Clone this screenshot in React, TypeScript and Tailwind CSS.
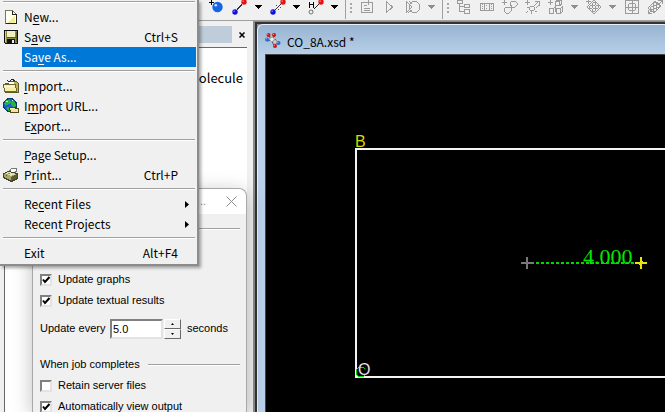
import React from 'react';

const MENU_FONT = "font-['Noto_Sans_CJK_TC','Noto_Sans',sans-serif]";
const DIALOG_FONT = "font-['Liberation_Sans',Arial,sans-serif]";

type IconProps = { children: React.ReactNode };

const Icon: React.FC<IconProps> = ({ children }) => (
    <svg width="16" height="16" viewBox="0 0 16 16" fill="none" shapeRendering="crispEdges" aria-hidden="true">
        {children}
    </svg>
);

const NewIcon = () => (
    <Icon>
        <path d="M2.5 1.5h7l4 4v9h-11z" fill="#fffff4" stroke="#77775f" />
        <path d="M4 14l8-8v8H4z" fill="#f2ee9c" />
        <path d="M9.5 1.5v4h4" stroke="#222" />
        <path d="M4 3h4v2H4z" fill="#fff" />
        <path d="M13.5 6v8.5H3" stroke="#222" />
    </Icon>
);

const SaveIcon = () => (
    <Icon>
        <path d="M1.5 1.5h13v13h-12l-1-1z" fill="#8c8c3c" stroke="#111" />
        <path d="M4 2h8v6H4z" fill="#efefc0" />
        <path d="M2 2h1v11H2z" fill="#d2d27a" />
        <path d="M4 8h9v1H4z" fill="#5b5b20" />
        <path d="M4 10h8v4H4z" fill="#111" />
        <path d="M9 11h2v3H9z" fill="#eee" />
        <path d="M13 3h1v10h-1z" fill="#60602a" />
    </Icon>
);

const ImportIcon = () => (
    <Icon>
        <path d="M2 5h4l1-2h6l2 2v9H2z" fill="#bcb154" stroke="#5e5925" />
        <path d="M0.5 6.5h12l1 7h-12z" fill="#f5efa0" stroke="#6c6530" />
        <path d="M4 2l2 2 3-3 3 2" stroke="#222" />
        <path d="M6 4h5v2H6z" fill="#fff" />
        <path d="M2 8h9v1H2z" fill="#fffde0" />
    </Icon>
);

const GlobeIcon = () => (
    <Icon>
        <circle cx="7" cy="7" r="6.5" fill="#1765c4" stroke="#0a3772" />
        <path d="M3 2h4l1 2-2 2-3 1-2-1zM9 3l3 1 1 4-3 1-2-3zM4 9l3 1-1 3-2-1z" fill="#28b33a" />
        <path d="M3 3h2v1H3zM9 2h1v1H9z" fill="#bdf3ff" />
        <path d="M6.5 9.5h5l1 1h3v4h-8z" fill="#f3e6a4" stroke="#544b1c" />
    </Icon>
);

const PrintIcon = () => (
    <Icon>
        <path d="M5 6l4-5 5 1-2 5z" fill="#fff" stroke="#777" />
        <path d="M0.5 6.5l5-2 9 2v5l-6 3-8-4z" fill="#a8a66a" stroke="#444428" />
        <path d="M2 6l4-1 7 2-5 2z" fill="#e3e2b6" />
        <path d="M8 10l6-3v4l-6 3z" fill="#5e5d30" />
        <path d="M5 6h2v1H5z" fill="#1ccf2c" />
        <path d="M3 8h1v1H3z" fill="#c22" />
    </Icon>
);

const Ball: React.FC<{ x: number; y: number; color: string; r?: number }> = ({ x, y, color, r = 2.7 }) => (
    <g shapeRendering="auto">
        <circle cx={x} cy={y} r={r} fill={color} />
        <circle cx={x - r / 3} cy={y - r / 3} r={r / 4} fill="#fff" fillOpacity="0.8" />
    </g>
);

const AtomIcon = () => (
    <Icon>
        <path d="M0 3.5h5M2.5 1v5" stroke="#000" />
        <Ball x={8.5} y={8} r={5.2} color="#1464e8" />
    </Icon>
);

const BondIcon = () => (
    <Icon>
        <path d="M3 13L12 3" stroke="#333" />
        <Ball x={3} y={13} color="#1010e0" />
        <Ball x={12} y={3} color="#e81010" />
    </Icon>
);

const FragmentIcon = () => (
    <Icon>
        <path d="M3 13L13 3" stroke="#333" strokeDasharray="2 1" />
        <path d="M6 7l2-2M8 11l3-3" stroke="#e81010" strokeDasharray="2 1" />
        <Ball x={3} y={13} color="#1010e0" />
        <Ball x={13} y={3} color="#e81010" />
    </Icon>
);

const HydrogenIcon = () => (
    <Icon>
        <path d="M1.5 3v6M5.5 3v6M2 5.500h4" stroke="#000" />
        <path d="M4 12L12 4" stroke="#222" strokeDasharray="2 1" />
        <circle cx="3" cy="13" r="2" fill="#eee" stroke="#777" shapeRendering="auto" />
        <Ball x={13} y={3} color="#e81010" />
    </Icon>
);

const ScriptIcon = () => (
    <Icon>
        <path d="M2.5 3.5h11v10h-11zM9.5 1v5M7 3.5h4M5 6.5h3M5 9.5h6M5 11.5h6" stroke="#9b9b9b" />
    </Icon>
);

const PlayIcon = () => (
    <Icon>
        <path d="M4.5 2.5v11l6-5.5z" stroke="#9b9b9b" />
    </Icon>
);

const DebugIcon = () => (
    <Icon>
        <path d="M1.5 2v12M2 3l5 5-5 5M4 2l3 3M3 14l4-3" stroke="#9b9b9b" />
        <circle cx="9.5" cy="8" r="5.5" stroke="#9b9b9b" />
    </Icon>
);

const TreeIcon = () => (
    <Icon>
        <path d="M1.5 1.5h5v3h-5zM8.5 5.5h5v3h-5zM8.5 10.5h5v4h-5zM3.5 5v7.5h5M4 7.5h4" stroke="#9b9b9b" />
    </Icon>
);

const FilmIcon = () => (
    <Icon>
        <path d="M1.5 4.5h13v7h-13zM5.5 5v6M10.5 5v6" stroke="#9b9b9b" />
        <path d="M3.5 5v7M7 6.500h2M7 9.500h2M12.5 5v7" stroke="#9b9b9b" strokeDasharray="1 1" />
    </Icon>
);

const MotionIcon = () => (
    <Icon>
        <path d="M0 3.5h5M2.5 1v5" stroke="#9b9b9b" />
        <path d="M8 7V4l2-2h3l2 2v2l-2 2H4L2 10v2l2 2h3l2-2V6" stroke="#9b9b9b" />
    </Icon>
);

const VectorIcon = () => (
    <Icon>
        <path d="M0 3.5h5M2.5 1v5M9 7l4-4M10 2.5h4.5V7M11 9l3-3M3 12l-2 2M6 12v3M2 8.500h2M10 12l2 1" stroke="#9b9b9b" />
        <circle cx="7" cy="9.5" r="2.5" stroke="#9b9b9b" />
    </Icon>
);

const CellsIcon = () => (
    <Icon>
        <path d="M0 3.5h5M2.5 1v5M7.5 2.5h4v4h-4zM1.5 9.5h4v5h-4zM8.5 9.5h4v5h-4zM7.5 2.5l2-1h4v4l-2 1M12.5 9.5l2-2v5l-2 2M5.5 9.5l2-2v5" stroke="#9b9b9b" />
    </Icon>
);

const LatticeIcon = () => (
    <Icon>
        <path d="M8 1l7 7-7 7-7-7z" stroke="#9b9b9b" />
        <path d="M0 2.5h5M2.5 0v5" stroke="#9b9b9b" />
        <circle cx="8" cy="5" r="1.5" stroke="#9b9b9b" />
        <circle cx="5" cy="8" r="1.5" stroke="#9b9b9b" />
        <circle cx="11" cy="8" r="1.5" stroke="#9b9b9b" />
        <circle cx="8" cy="11" r="1.5" stroke="#9b9b9b" />
    </Icon>
);

const TargetIcon = () => (
    <Icon>
        <path d="M1.5 1.5h13v13h-13zM8 1v14M1 8h14" stroke="#9b9b9b" />
        <circle cx="8" cy="8" r="4" stroke="#9b9b9b" />
    </Icon>
);

const RotateCellIcon = () => (
    <Icon>
        <path d="M1 9l7-7 6 5-7 7zM11 1.5h4V5M15 2l-3 3M1.5 11v3.5H5M1 15l3-3" stroke="#9b9b9b" />
        <circle cx="8" cy="5" r="1.5" stroke="#9b9b9b" />
        <circle cx="5" cy="9" r="1.5" stroke="#9b9b9b" />
        <circle cx="11" cy="7" r="1.5" stroke="#9b9b9b" />
        <circle cx="8" cy="11" r="1.5" stroke="#9b9b9b" />
    </Icon>
);

const MoleculeIcon = () => (
    <svg width="16" height="16" viewBox="0 0 16 16" aria-hidden="true">
        <path d="M4 3l2 5-4 1M6 8l4-4M6 8l3 5 4-2-3-4" stroke="#444" fill="none" />
        <circle cx="7" cy="7.5" r="2.2" fill="#e8e8e8" stroke="#888" strokeWidth="0.5" />
        <circle cx="10" cy="10" r="2.2" fill="#ccc" stroke="#777" strokeWidth="0.5" />
        <Ball x={3.5} y={3} r={2} color="#c81818" />
        <Ball x={9} y={3} r={2} color="#c81818" />
        <Ball x={10} y={14} r={2} color="#c81818" />
        <Ball x={2} y={7.5} r={2} color="#2a6fc8" />
        <Ball x={13.5} y={11} r={2} color="#2a6fc8" />
    </svg>
);

const ToolButton: React.FC<{ label: string; children: React.ReactNode }> = ({ label, children }) => (
    <button type="button" aria-label={label} className="flex w-[23px] shrink-0 items-start justify-center">
        {children}
    </button>
);

const DropButton: React.FC<{ label: string; disabled?: boolean }> = ({ label, disabled }) => (
    <button type="button" aria-label={label} className={`flex h-4 w-[15px] shrink-0 items-center justify-center ${disabled ? 'text-[#8e8e8e]' : 'text-black'}`}>
        <svg width="7" height="4" viewBox="0 0 7 4" fill="currentColor" shapeRendering="crispEdges">
            <path d="M0 0h7L3.5 4z" />
        </svg>
    </button>
);

const ToolDivider = () => (
    <div className="flex h-5 w-[13px] shrink-0 items-start gap-1 pl-[3px]">
        <span className="h-5 w-px bg-[#a0a0a0]" />
        <svg width="3" height="16" viewBox="0 0 3 16" fill="#a8a8a8" shapeRendering="crispEdges">
            <path d="M0 4h2v2H0zM0 8h2v2H0zM0 12h2v2H0z" />
        </svg>
    </div>
);

const Toolbar = () => (
    <div className="h-[21px] shrink-0 overflow-hidden border-b border-[#a0a0a0] bg-[#f0f0f0] pl-[205px]">
        <div className="-mt-px flex items-start">
            <ToolButton label="Add atom"><AtomIcon /></ToolButton>
            <ToolButton label="Sketch bond"><BondIcon /></ToolButton>
            <DropButton label="Bond options" />
            <ToolButton label="Sketch fragment"><FragmentIcon /></ToolButton>
            <DropButton label="Fragment options" />
            <ToolButton label="Adjust hydrogen"><HydrogenIcon /></ToolButton>
            <DropButton label="Hydrogen options" />
            <ToolDivider />
            <ToolButton label="New script"><ScriptIcon /></ToolButton>
            <ToolButton label="Run"><PlayIcon /></ToolButton>
            <ToolButton label="Debug"><DebugIcon /></ToolButton>
            <DropButton label="Debug options" disabled />
            <ToolDivider />
            <ToolButton label="Hierarchy"><TreeIcon /></ToolButton>
            <ToolButton label="Animation"><FilmIcon /></ToolButton>
            <ToolButton label="Motion group"><MotionIcon /></ToolButton>
            <ToolButton label="Vector"><VectorIcon /></ToolButton>
            <ToolButton label="Build cells"><CellsIcon /></ToolButton>
            <DropButton label="Cell options" disabled />
            <ToolButton label="Lattice"><LatticeIcon /></ToolButton>
            <DropButton label="Lattice options" disabled />
            <ToolButton label="Center"><TargetIcon /></ToolButton>
            <ToolButton label="Rotate cell"><RotateCellIcon /></ToolButton>
        </div>
    </div>
);

type MenuEntry = {
    label: string;
    accessKey: number;
    shortcut?: string;
    icon?: React.ReactNode;
    submenu?: boolean;
    selected?: boolean;
};

const menuGroups: MenuEntry[][] = [
    [
        { label: 'New...', accessKey: 1, icon: <NewIcon /> },
        { label: 'Save', accessKey: 1, shortcut: 'Ctrl+S', icon: <SaveIcon /> },
        { label: 'Save As...', accessKey: 2, selected: true },
    ],
    [
        { label: 'Import...', accessKey: 0, icon: <ImportIcon /> },
        { label: 'Import URL...', accessKey: 1, icon: <GlobeIcon /> },
        { label: 'Export...', accessKey: 1 },
    ],
    [
        { label: 'Page Setup...', accessKey: 0 },
        { label: 'Print...', accessKey: 1, shortcut: 'Ctrl+P', icon: <PrintIcon /> },
    ],
    [
        { label: 'Recent Files', accessKey: 2, submenu: true },
        { label: 'Recent Projects', accessKey: 5, submenu: true },
    ],
    [{ label: 'Exit', accessKey: -1, shortcut: 'Alt+F4' }],
];

const MenuLabel: React.FC<{ text: string; accessKey: number }> = ({ text, accessKey }) =>
    accessKey < 0 ? (
        <span>{text}</span>
    ) : (
        <span>
            {text.slice(0, accessKey)}
            <u className="underline-offset-2">{text[accessKey]}</u>
            {text.slice(accessKey + 1)}
        </span>
    );

const MenuItem: React.FC<{ entry: MenuEntry }> = ({ entry }) => (
    <button type="button" role="menuitem" className="flex h-5 w-full items-center text-left">
        <span className="flex w-[22px] shrink-0 justify-center">{entry.icon}</span>
        <span className={`flex h-5 flex-1 items-center justify-between pl-0.5 ${entry.selected ? 'bg-[#0078d7] text-white' : ''}`}>
            <MenuLabel text={entry.label} accessKey={entry.accessKey} />
            {entry.shortcut && <span className="pr-[18px]">{entry.shortcut}</span>}
            {entry.submenu && (
                <svg width="4" height="7" viewBox="0 0 4 7" className="mr-[7px]" fill="#000">
                    <path d="M0 0l4 3.5L0 7z" />
                </svg>
            )}
        </span>
    </button>
);

const FileMenu = () => (
    <div role="menu" aria-label="File" className={`absolute top-0 left-0 z-20 w-[199px] border-r-2 border-b-2 border-[#8c8c8c] bg-[#f0f0f0] pt-px pr-px pb-px text-[12px] leading-5 text-black shadow-[2px_2px_3px_rgba(0,0,0,0.35)] ${MENU_FONT}`}>
        {menuGroups.map((group, i) => (
            <div key={i}>
                <div className={`mr-px ml-[3px] flex flex-col ${i === 0 ? 'h-1.5' : 'h-[9px] pt-[3px]'}`}>
                    <span className="h-px bg-[#a0a0a0]" />
                    <span className="h-px bg-white" />
                </div>
                {group.map(entry => <MenuItem key={entry.label} entry={entry} />)}
            </div>
        ))}
    </div>
);

const CheckRow: React.FC<{ label: string; checked?: boolean }> = ({ label, checked }) => (
    <label className="flex h-[21px] shrink-0 items-center gap-1.5">
        <span className="relative flex size-3">
            <input type="checkbox" defaultChecked={checked} className="peer size-3 appearance-none border-2 border-t-[#808080] border-r-[#e3e3e3] border-b-[#e3e3e3] border-l-[#808080] bg-white" />
            <svg viewBox="0 0 12 12" className="pointer-events-none absolute inset-0 hidden size-3 peer-checked:block" fill="none">
                <path d="M3 5.5l2 2.5 4.5-5" stroke="#000" strokeWidth="2" />
            </svg>
        </span>
        {label}
    </label>
);

const GroupTitle: React.FC<{ title?: string }> = ({ title }) => (
    <div className="flex h-[21px] shrink-0 items-center gap-2">
        {title}
        <span className="h-0.5 flex-1 border-t border-[#a0a0a0] bg-white" />
    </div>
);

const JobDialog = () => (
    <div role="dialog" aria-label="Job options" className={`absolute top-[188px] left-8 z-10 flex h-[calc(100%-188px)] w-[215px] flex-col rounded-t-lg border border-b-0 border-[#a8a8a8] bg-[#f0f0f0] text-[11px] text-black shadow-[0_4px_20px_rgba(0,0,0,0.25)] ${DIALOG_FONT}`}>
        <div className="flex h-[25px] shrink-0 items-center justify-end gap-5 rounded-t-lg bg-white pr-[9px] text-[#888]">
            <span>...</span>
            <button type="button" aria-label="Close">
                <svg width="11" height="11" viewBox="0 0 11 11" stroke="#8a8a8a">
                    <path d="M0.5 0.5l10 10M10.5 0.5l-10 10" />
                </svg>
            </button>
        </div>
        <div className="flex flex-col overflow-hidden pt-1 pr-1.5 pl-[7px]">
            <GroupTitle />
            <div className="h-[30px] shrink-0" />
            <CheckRow label="Update graphs" checked />
            <CheckRow label="Update textual results" checked />
            <div className="flex h-[35px] shrink-0 items-center">
                <label htmlFor="interval" className="w-[70px]">Update every</label>
                <input id="interval" defaultValue="5.0" className="h-5 w-[53px] border-2 border-t-[#808080] border-r-[#e3e3e3] border-b-[#e3e3e3] border-l-[#808080] bg-white px-px" />
                <div className="mr-1.5 ml-px flex flex-col">
                    {['Increase', 'Decrease'].map((name, i) => (
                        <button key={name} type="button" aria-label={name} className="flex h-2.5 w-[17px] items-center justify-center border border-t-white border-r-[#696969] border-b-[#696969] border-l-white">
                            <svg width="3" height="2" viewBox="0 0 3 2" fill="#000">
                                <path d={i === 0 ? 'M0 2l1.5-2L3 2z' : 'M0 0l1.5 2L3 0z'} />
                            </svg>
                        </button>
                    ))}
                </div>
                <span>seconds</span>
            </div>
            <div className="h-2 shrink-0" />
            <GroupTitle title="When job completes" />
            <CheckRow label="Retain server files" />
            <CheckRow label="Automatically view output" checked />
        </div>
    </div>
);

const ProjectPane = () => (
    <aside className="flex w-[253px] shrink-0 flex-col bg-[#f0f0f0] pt-[5px]">
        <div className="flex h-[17px] shrink-0 items-center gap-1 pr-[5px]">
            <div className="h-[17px] flex-1 bg-[#bfcddb]" />
            <button type="button" aria-label="Close pane" className="flex w-3 justify-center">
                <svg width="6" height="6" viewBox="0 0 6 6" stroke="#000" strokeWidth="1.5">
                    <path d="M0.5 0.5l5 5M5.5 0.5l-5 5" />
                </svg>
            </button>
        </div>
        <div className={`mt-1 mr-1.5 ml-1 flex-1 border-t border-l border-[#696969] bg-white pt-5 pr-1 text-right text-[13px] ${MENU_FONT}`}>
            Molecule
        </div>
    </aside>
);

const Viewport = () => (
    <svg className="block size-full bg-black" shapeRendering="crispEdges" role="img" aria-label="CO_8A structure">
        <path d="M4000 94H90V322H4000" fill="none" stroke="#f4f4f4" strokeWidth="2" />
        <text x="89" y="92" fill="#d8d800" className="font-['Liberation_Sans',sans-serif] text-[16px]">B</text>
        <path d="M99 314a5 5 0 1 0 0 6" fill="none" stroke="#00e000" />
        <text x="92" y="320" fill="#e4e4e4" className="font-['Liberation_Sans',sans-serif] text-[16px]">O</text>
        <path d="M265 208H374" stroke="#00d800" strokeWidth="2" strokeDasharray="3 2" />
        <path d="M255 208h12M261 202v12" stroke="#787878" strokeWidth="2" />
        <path d="M369 208h12M375 202v12" stroke="#e6e600" strokeWidth="2" />
        <circle cx="375" cy="208" r="2" fill="#e6e600" />
        <text x="317" y="209" fill="#00e800" className="font-['Liberation_Serif',serif] text-[22px]">4.000</text>
    </svg>
);

const Workspace = () => (
    <main className="flex min-w-0 flex-1 flex-col border-t border-l-2 border-[#8c8c8c] bg-[#f0f0f0]">
        <div className="flex flex-1 flex-col border-t-2 border-l-2 border-[#333] bg-[#8c8c8c]">
            <div className="flex flex-1 flex-col rounded-tl-md border-t border-l border-[#e8f1fa] bg-linear-to-b from-[#99b4d1] to-[#b9d1ea] to-8% pl-[7px]">
                <div className={`flex h-[29px] shrink-0 items-center gap-1.5 text-[12px] text-black ${MENU_FONT}`}>
                    <MoleculeIcon />
                    <span className="pt-1">CO_8A.xsd *</span>
                </div>
                <div className="flex-1 overflow-hidden border-t border-l border-[#444]">
                    <Viewport />
                </div>
            </div>
        </div>
    </main>
);

const App: React.FC = () => (
    <div className="relative flex h-screen flex-col overflow-hidden bg-[#f0f0f0]">
        <Toolbar />
        <div className="flex min-h-0 flex-1">
            <ProjectPane />
            <Workspace />
        </div>
        <FileMenu />
        <JobDialog />
    </div>
);

export default App;
